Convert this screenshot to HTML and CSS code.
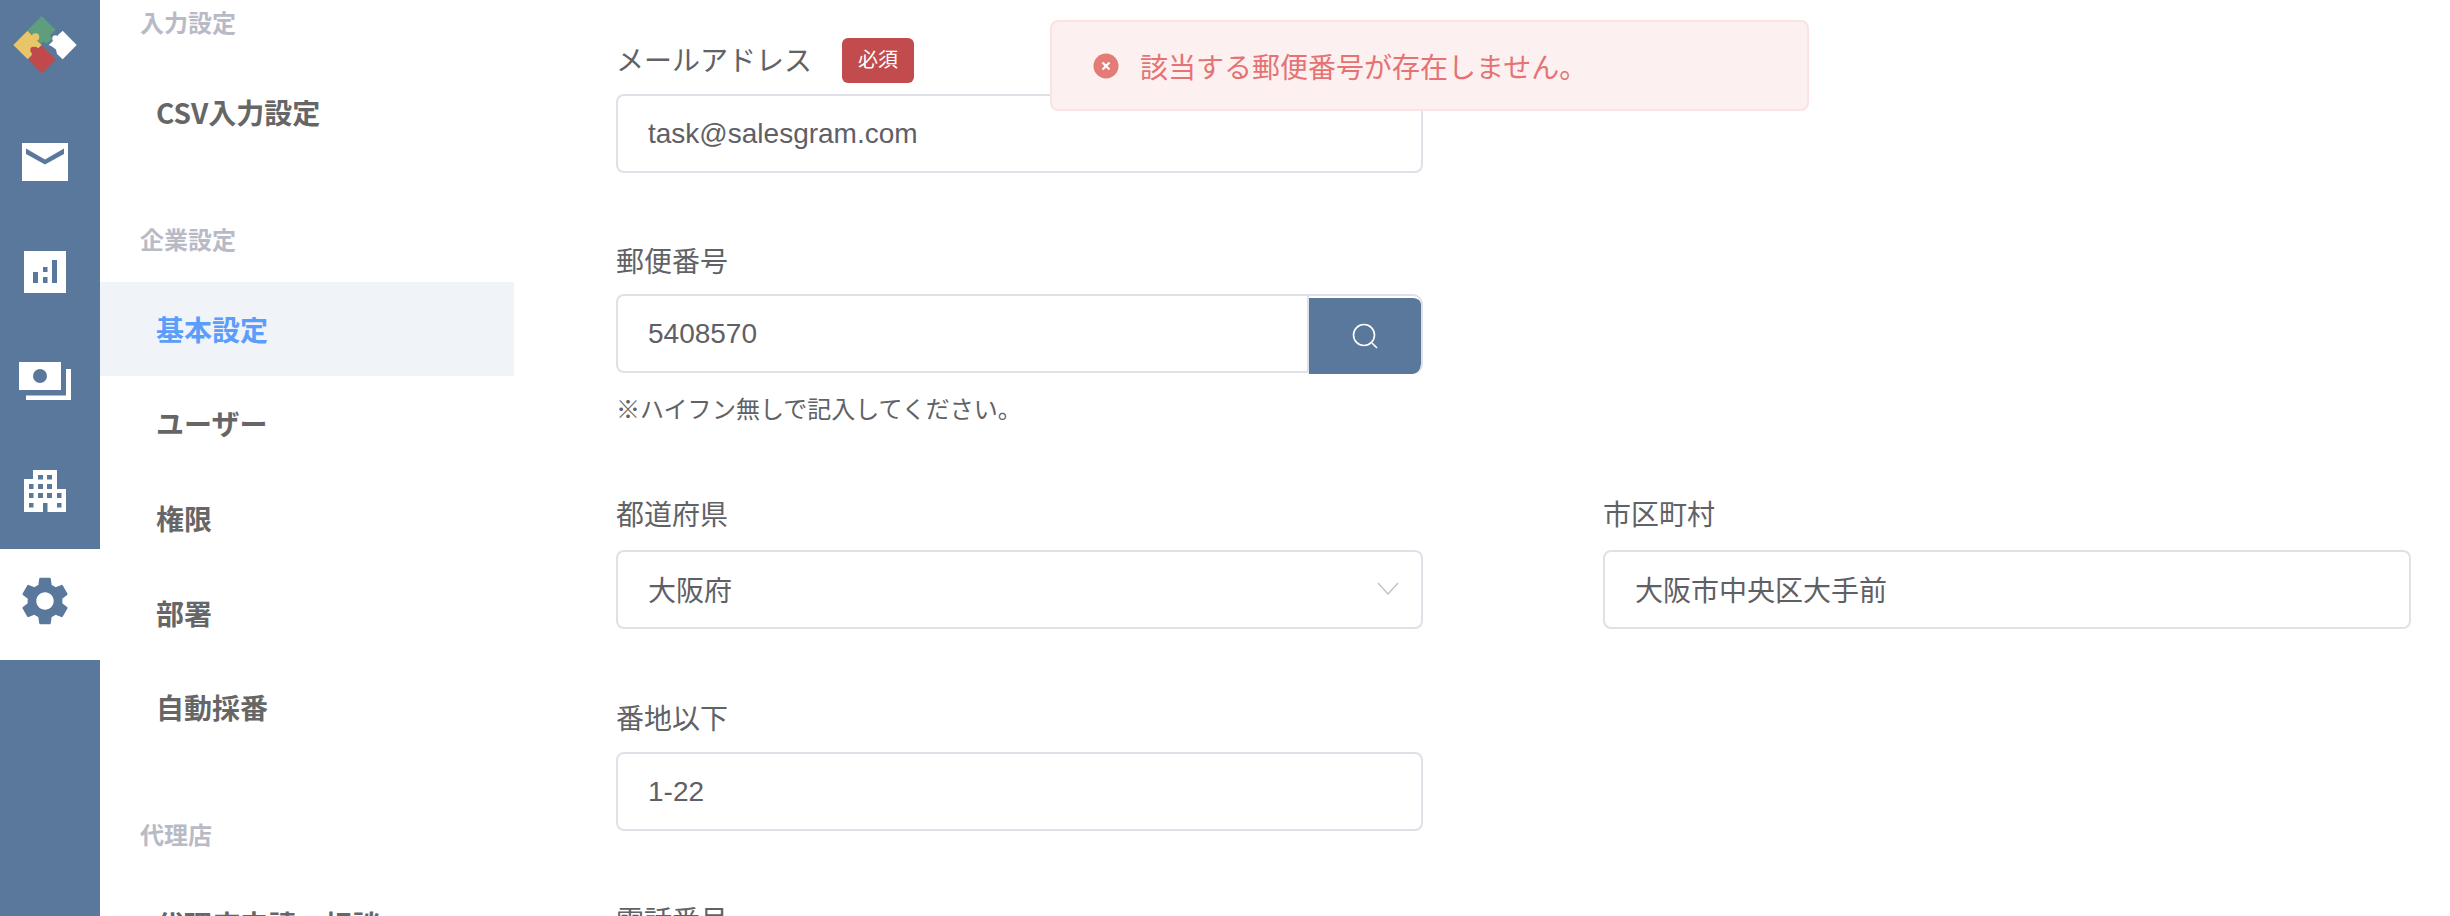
FILE: index.html
```html
<!DOCTYPE html>
<html lang="ja">
<head>
<meta charset="utf-8">
<title>基本設定</title>
<link rel="stylesheet" href="styles.css">
</head>
<body>
<div class="app">
  <nav class="rail">
    <div class="rail-logo">
      <svg width="100" height="107" viewBox="0 0 100 107">
        <path fill="#e8c566" d="M27.500 30.700 L41.700 45 L27.700 59.300 L13.300 45Z"/>
        <path fill="#5f9e7c" d="M41.700 16 L55.700 30 L50 35.500 L52 39 L47 43.500 L43 41.500 L41.700 44 L34 36.500 L27.700 30Z"/>
        <circle cx="35.500" cy="37" r="3.800" fill="#e8c566"/>
        <path fill="#c04a4b" d="M41.700 45.500 L55.700 59.500 L41.700 73.500 L28 59.500 L32 55.500 L31 49 L36 46.500 L38 48.500Z"/>
        <circle cx="33.500" cy="50" r="3.200" fill="#c04a4b"/>
        <path fill="#fff" d="M62.700 30.700 L76.700 45 L62.700 59.300 L57 54 L56 49.500 L52 46.500 L48.700 45 L53.500 40.500 L58 38 L58 35Z"/>
        <circle cx="55.500" cy="38.500" r="3.200" fill="#fff"/>
        <circle cx="50.500" cy="50.500" r="2.400" fill="#5a779c"/>
      </svg>
    </div>
    <a class="rail-item">
      <svg width="60" height="60" viewBox="15 132 60 60">
        <rect x="22" y="143" width="46" height="38" fill="#fff"/>
        <path d="M26 148.500 L45 159.500 L64 148.500 V154 L45 164.500 L26 154Z" fill="#5a779c"/>
      </svg>
    </a>
    <a class="rail-item">
      <svg width="60" height="60" viewBox="15 243 60 60">
        <rect x="24" y="251" width="42" height="42" fill="#fff"/>
        <g fill="#5a779c">
          <rect x="33" y="272" width="5" height="11"/>
          <rect x="43" y="267" width="4.500" height="5"/>
          <rect x="43" y="277" width="4.500" height="6"/>
          <rect x="52" y="260" width="5" height="23"/>
        </g>
      </svg>
    </a>
    <a class="rail-item">
      <svg width="60" height="60" viewBox="15 353 60 60">
        <rect x="19" y="362" width="42" height="28" fill="#fff"/>
        <circle cx="40" cy="376" r="7" fill="#5a779c"/>
        <path d="M66 369 H71 V400 H26 V395.500 H66Z" fill="#fff"/>
      </svg>
    </a>
    <a class="rail-item">
      <svg width="60" height="60" viewBox="15 464 60 60">
        <path d="M33 470 H57 V489 H66 V512 H24 V479 H33Z" fill="#fff"/>
        <g fill="#5a779c">
          <rect x="38" y="475" width="5" height="4.500"/>
          <rect x="47" y="475" width="5" height="4.500"/>
          <rect x="29" y="484" width="4.500" height="5"/>
          <rect x="38" y="484" width="5" height="5"/>
          <rect x="47" y="484" width="5" height="5"/>
          <rect x="29" y="493" width="4.500" height="5"/>
          <rect x="38" y="493" width="5" height="5"/>
          <rect x="47" y="493" width="5" height="5"/>
          <rect x="57" y="493" width="4.500" height="5"/>
          <rect x="29" y="503" width="4.500" height="4.500"/>
          <rect x="57" y="503" width="4.500" height="4.500"/>
          <rect x="43" y="503" width="4.500" height="9"/>
        </g>
      </svg>
    </a>
    <a class="rail-item rail-item-active">
      <svg class="rail-gear" width="58" height="58" viewBox="0 0 24 24">
        <path fill="#5a779c" d="M19.14 12.94c.04-.3.06-.61.06-.94 0-.32-.02-.64-.07-.94l2.03-1.58c.18-.14.23-.41.12-.61l-1.92-3.32c-.12-.22-.37-.29-.59-.22l-2.39.96c-.5-.38-1.03-.7-1.62-.94l-.36-2.54c-.04-.24-.24-.41-.48-.41h-3.84c-.24 0-.43.17-.47.41l-.36 2.54c-.59.24-1.13.57-1.62.94l-2.39-.96c-.22-.08-.47 0-.59.22L2.74 8.87c-.12.21-.08.47.12.61l2.03 1.58c-.05.3-.09.63-.09.94s.02.64.07.94l-2.03 1.58c-.18.14-.23.41-.12.61l1.92 3.32c.12.22.37.29.59.22l2.39-.96c.5.38 1.03.7 1.62.94l.36 2.54c.05.24.24.41.48.41h3.84c.24 0 .44-.17.47-.41l.36-2.54c.59-.24 1.13-.56 1.62-.94l2.39.96c.22.08.47 0 .59-.22l1.92-3.32c.12-.22.07-.47-.12-.61l-2.01-1.58zM12 15.6c-1.98 0-3.6-1.62-3.6-3.6s1.62-3.6 3.6-3.6 3.6 1.62 3.6 3.6-1.62 3.6-3.6 3.6z"/>
      </svg>
    </a>
  </nav>

  <aside class="subnav">
    <section class="subnav-section">
      <h2 class="subnav-title">入力設定</h2>
      <a class="subnav-item">CSV入力設定</a>
    </section>
    <section class="subnav-section">
      <h2 class="subnav-title">企業設定</h2>
      <a class="subnav-item subnav-item-active">基本設定</a>
      <a class="subnav-item">ユーザー</a>
      <a class="subnav-item">権限</a>
      <a class="subnav-item">部署</a>
      <a class="subnav-item">自動採番</a>
    </section>
    <section class="subnav-section">
      <h2 class="subnav-title">代理店</h2>
      <a class="subnav-item">代理店申請・相談</a>
    </section>
  </aside>

  <main class="form">
    <div class="field field-first">
      <div class="field-label">メールアドレス<span class="badge">必須</span></div>
      <div class="control">task@salesgram.com</div>
    </div>
    <div class="field">
      <div class="field-label field-label-low">郵便番号</div>
      <div class="control-group">
        <div class="control control-joined">5408570</div>
        <button class="search-button" type="button">
          <svg width="30" height="30" viewBox="0 0 30 30">
            <circle cx="14" cy="14" r="10.500" fill="none" stroke="#fff" stroke-width="1.600"/>
            <path d="M22 22 L27 27" stroke="#fff" stroke-width="1.600" fill="none"/>
          </svg>
        </button>
      </div>
      <p class="hint">※ハイフン無しで記入してください。</p>
    </div>
    <div class="field field-start">
      <div class="field-label field-label-high">都道府県</div>
      <div class="control control-cjk control-select">大阪府
        <svg width="22" height="13" viewBox="0 0 22 13">
          <path d="M1 1 L11 12 L21 1" fill="none" stroke="#c0c4cc" stroke-width="1.500"/>
        </svg>
      </div>
    </div>
    <div class="field">
      <div class="field-label field-label-high">市区町村</div>
      <div class="control control-cjk">大阪市中央区大手前</div>
    </div>
    <div class="field field-start">
      <div class="field-label">番地以下</div>
      <div class="control">1-22</div>
    </div>
    <div class="field field-start">
      <div class="field-label">電話番号</div>
    </div>
  </main>

  <div class="toast" role="alert">
    <svg width="26" height="26" viewBox="0 0 26 26">
      <circle cx="13" cy="13" r="12.500" fill="#e57b76"/>
      <path d="M9.500 9.500 L16.500 16.500 M16.500 9.500 L9.500 16.500" stroke="#fff" stroke-width="2.200"/>
    </svg>
    <span>該当する郵便番号が存在しません。</span>
  </div>
</div>
</body>
</html>
```

FILE: styles.css
```css
* { box-sizing: border-box; }

html, body {
  margin: 0;
  height: 100%;
  overflow: hidden;
  background: #fff;
}

body {
  font-family: "Liberation Sans", "Noto Sans CJK JP", sans-serif;
  color: #606266;
}

.app {
  position: relative;
  display: flex;
  height: 916px;
  overflow: hidden;
}

/* icon rail */
.rail {
  flex: 0 0 100px;
  background: #5a779c;
}

.rail-logo {
  height: 107px;
}

.rail-logo svg,
.rail-item svg {
  display: block;
}

.rail-item {
  display: flex;
  align-items: center;
  justify-content: center;
  height: 110.5px;
  padding-right: 10px;
}

.rail-item-active {
  background: #fff;
}

.rail-gear {
  margin-bottom: 7px;
}

/* secondary navigation */
.subnav {
  flex: 0 0 414px;
  font-family: "Noto Sans CJK JP", sans-serif;
}

.subnav-section {
  margin-bottom: 57px;
}

.subnav-title {
  margin: 0 0 21px;
  padding-left: 40px;
  font-size: 24px;
  line-height: 44px;
  font-weight: 700;
  color: #b8bbc6;
}

.subnav-item {
  display: block;
  height: 94.7px;
  padding-left: 56px;
  font-size: 28px;
  line-height: 94.7px;
  font-weight: 700;
  color: #666;
}

.subnav-item-active {
  background: #f0f4f9;
  color: #5b9dfa;
}

/* form */
.form {
  flex: 1;
  min-width: 0;
  display: grid;
  grid-template-columns: 807px 808px;
  column-gap: 180px;
  align-content: start;
  padding: 36px 39px 0 102px;
}

.field {
  margin-bottom: 65px;
  min-width: 0;
}

.field-start,
.field-first {
  grid-column: 1;
}

.field-first {
  margin-bottom: 63px;
}

.field-first + .field {
  grid-column: 1;
}

.field-label {
  display: flex;
  align-items: center;
  height: 45px;
  margin-bottom: 13px;
  font-size: 28px;
  color: #606266;
}

.field-label-low {
  padding-top: 2px;
}

.field-label-high {
  padding-bottom: 4px;
}

.badge {
  display: block;
  width: 72px;
  height: 45px;
  margin: 4px 0 0 30px;
  border-radius: 6px;
  background: #c14b4d;
  color: #fff;
  font-size: 20px;
  line-height: 45px;
  text-align: center;
}

.control {
  display: flex;
  align-items: center;
  height: 79px;
  padding: 0 30px;
  border: 2px solid #e0e0e8;
  border-radius: 8px;
  background: #fff;
  font-size: 28px;
  color: #5f6065;
}

.control-cjk {
  padding-bottom: 2px;
}

.control-select {
  justify-content: space-between;
  padding-right: 22px;
}

.control-group {
  display: flex;
  height: 79px;
}

.control-joined {
  flex: 1;
  min-width: 0;
  border-radius: 8px 0 0 8px;
}

.search-button {
  display: flex;
  align-items: center;
  justify-content: center;
  flex: 0 0 114px;
  height: 80px;
  padding: 2px 0 0;
  border: 0;
  border-top: 2px solid #e0e0e8;
  border-right: 2px solid #e0e0e8;
  border-radius: 0 10px 10px 0;
  background: #5a779c;
  background-clip: content-box;
}

.hint {
  margin: 18px 0 -2px;
  font-size: 24px;
  line-height: 38px;
  color: #606266;
}

/* message */
.toast {
  position: absolute;
  top: 20px;
  left: 1050px;
  display: flex;
  align-items: center;
  gap: 21px;
  width: 759px;
  height: 91px;
  padding-left: 41px;
  border: 2px solid #f9e3e3;
  border-radius: 8px;
  background: #fcf0f0;
  font-family: "Noto Sans CJK JP", sans-serif;
  font-size: 28px;
  color: #e57373;
}
```
